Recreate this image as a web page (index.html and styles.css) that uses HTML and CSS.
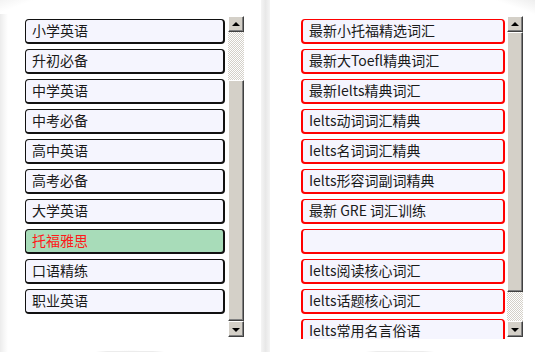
FILE: index.html
```html
<!DOCTYPE html>
<html lang="zh-CN">
<head>
<meta charset="utf-8">
<title>词汇分类</title>
<link rel="stylesheet" href="styles.css">
</head>
<body>
<div class="page">
  <section class="panel panel-left">
    <div class="listbox">
      <ul class="items">
        <li class="item">小学英语</li>
        <li class="item">升初必备</li>
        <li class="item">中学英语</li>
        <li class="item">中考必备</li>
        <li class="item">高中英语</li>
        <li class="item">高考必备</li>
        <li class="item">大学英语</li>
        <li class="item item-selected">托福雅思</li>
        <li class="item">口语精练</li>
        <li class="item">职业英语</li>
      </ul>
      <div class="scrollbar sb-left">
        <div class="sb-btn"><span class="arrow-up"></span></div>
        <div class="sb-track sb-track-a"></div>
        <div class="sb-thumb"></div>
        <div class="sb-btn"><span class="arrow-down"></span></div>
      </div>
    </div>
  </section>
  <div class="divider"></div>
  <section class="panel panel-right">
    <div class="listbox">
      <ul class="items items-red">
        <li class="item">最新小托福精选词汇</li>
        <li class="item">最新大Toefl精典词汇</li>
        <li class="item">最新Ielts精典词汇</li>
        <li class="item">Ielts动词词汇精典</li>
        <li class="item">Ielts名词词汇精典</li>
        <li class="item">Ielts形容词副词精典</li>
        <li class="item">最新 GRE 词汇训练</li>
        <li class="item"></li>
        <li class="item">Ielts阅读核心词汇</li>
        <li class="item">Ielts话题核心词汇</li>
        <li class="item">Ielts常用名言俗语</li>
      </ul>
      <div class="scrollbar sb-right">
        <div class="sb-btn"><span class="arrow-up"></span></div>
        <div class="sb-thumb"></div>
        <div class="sb-track sb-track-b"></div>
        <div class="sb-btn"><span class="arrow-down"></span></div>
      </div>
    </div>
  </section>
</div>
</body>
</html>
```

FILE: styles.css
```css
html, body {
  margin: 0;
  padding: 0;
  background: #ffffff;
}

body {
  font-family: "Noto Sans CJK SC", "Noto Sans", sans-serif;
  font-size: 14px;
  color: #1a1a1a;
}

.page {
  width: 535px;
  height: 352px;
  display: flex;
  overflow: hidden;
  background:
    radial-gradient(ellipse 150px 30px at 130px 372px, #ececec 70%, transparent 72%),
    radial-gradient(ellipse 150px 30px at 400px 372px, #ececec 70%, transparent 72%),
    linear-gradient(to right, #ececec 0, #f6f6f6 4px, #ffffff 8px);
}

.panel {
  height: 352px;
  box-sizing: border-box;
  padding-top: 16px;
}

.panel-left {
  width: 261px;
  padding-left: 25px;
  background:
    linear-gradient(160deg, #f3f3f3 0, #ffffff 12px) top left / 100% 14px no-repeat;
}

.divider {
  width: 9px;
  height: 352px;
  background: linear-gradient(to right, #f4f4f4, #e8e8e8 50%, #f4f4f4);
}

.panel-right {
  flex: 1;
  padding-left: 31px;
  background:
    linear-gradient(200deg, #eeeeee 0, #ffffff 14px) top right / 100% 16px no-repeat;
}

.listbox {
  display: flex;
  align-items: flex-start;
  gap: 2px;
}

.items {
  list-style: none;
  margin: 0;
  padding: 3px 0 0;
  height: 321px;
  box-sizing: border-box;
  overflow: hidden;
  display: flex;
  flex-direction: column;
  gap: 5px;
}

.panel-left .items {
  width: 200px;
}

.panel-right .items {
  width: 204px;
  height: 323px;
}

.item {
  flex: none;
  height: 25px;
  box-sizing: border-box;
  border: 1px solid #111;
  border-right-width: 2px;
  border-bottom-width: 2px;
  border-radius: 4px;
  background: #f5f5fe;
  padding-left: 6px;
  line-height: 21px;
  white-space: nowrap;
  overflow: hidden;
}

.item-selected {
  background: #a8dcb9;
  color: #ff1a1a;
}

.items-red .item {
  border-color: #ff0000;
  border-left-width: 2px;
}

.scrollbar {
  width: 16px;
  height: 321px;
  display: flex;
  flex-direction: column;
}

.sb-left {
  margin-left: 1px;
}

.sb-btn {
  flex: none;
  height: 16px;
  box-sizing: border-box;
  background: #d4d0c8;
  border-top: 1px solid #ffffff;
  border-left: 1px solid #ffffff;
  border-right: 1px solid #404040;
  border-bottom: 1px solid #404040;
  box-shadow: inset -1px -1px 0 #808080;
  display: flex;
  align-items: center;
  justify-content: center;
}

.arrow-up {
  width: 0;
  height: 0;
  border-left: 4px solid transparent;
  border-right: 4px solid transparent;
  border-bottom: 4px solid #000;
  margin-top: -1px;
}

.arrow-down {
  width: 0;
  height: 0;
  border-left: 4px solid transparent;
  border-right: 4px solid transparent;
  border-top: 4px solid #000;
  margin-top: 1px;
}

.sb-track {
  flex: none;
  background: repeating-conic-gradient(#d4d0c8 0 25%, #ffffff 0 50%) 0 0 / 2px 2px;
}

.sb-track-a {
  height: 48px;
}

.sb-track-b {
  height: 29px;
}

.sb-thumb {
  flex: 1;
  box-sizing: border-box;
  background: #d4d0c8;
  border-top: 1px solid #ffffff;
  border-left: 1px solid #ffffff;
  border-right: 1px solid #404040;
  border-bottom: 1px solid #404040;
  box-shadow: inset -1px -1px 0 #808080;
}
```
